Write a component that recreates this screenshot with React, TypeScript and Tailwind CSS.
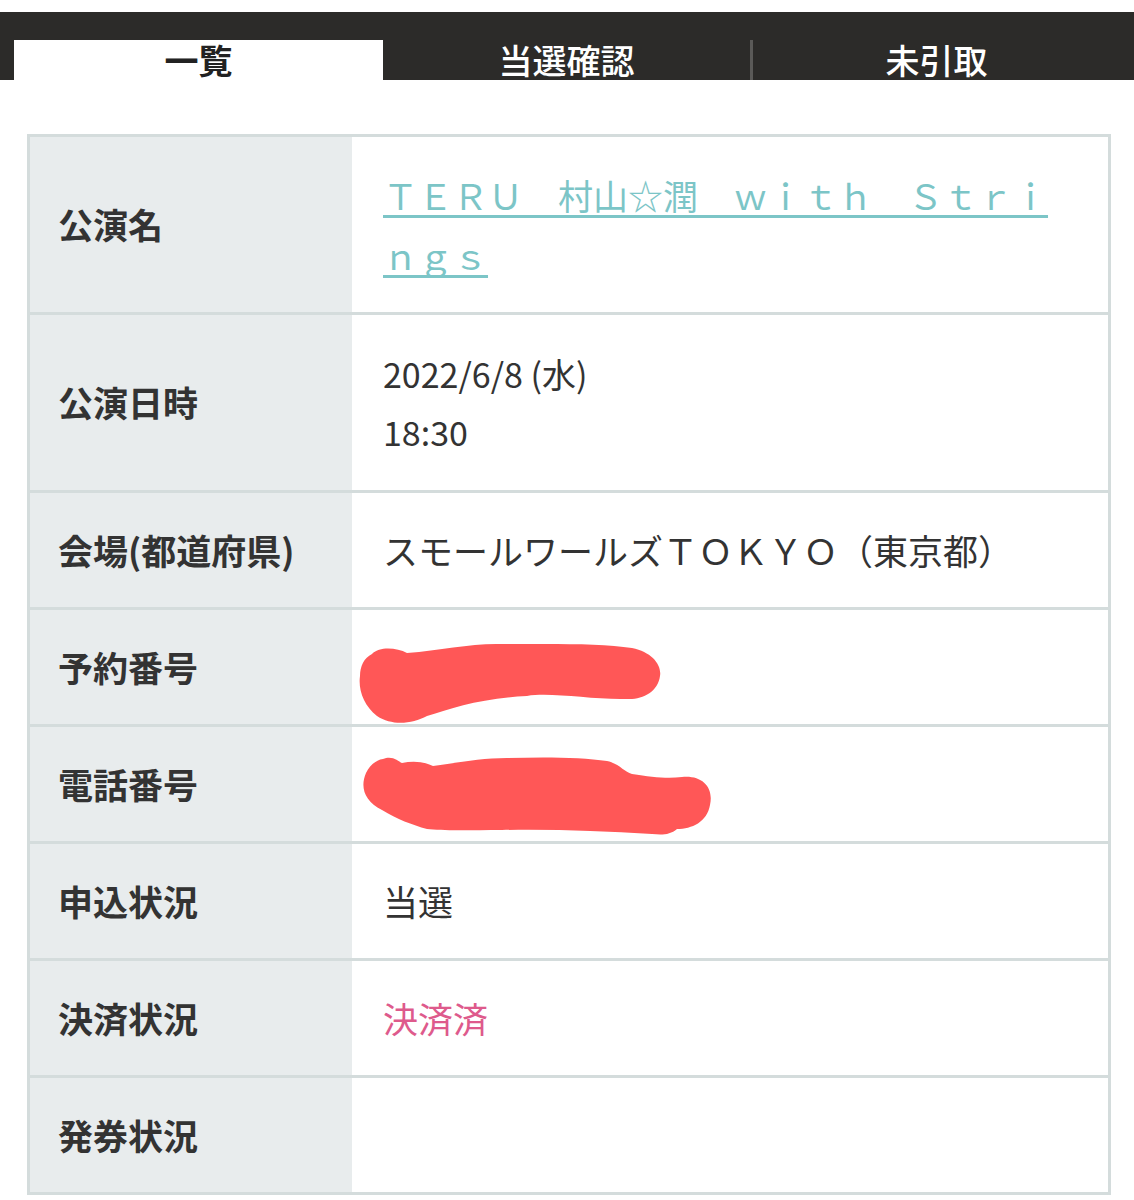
import React from "react";

type RowType = {
  label: string;
  tall?: boolean;
  content: React.ReactNode;
};

const font = { fontFamily: '"Noto Sans CJK JP", "Noto Sans", sans-serif' };

function Blob1() {
  return (
    <svg width="360" height="114" viewBox="0 0 360 114" className="block">
      <path
        d="M 20 44 C 28 36, 45 38, 55 43 C 90 40, 120 33, 150 34 C 200 34, 250 33, 280 38 C 300 42, 310 55, 308 66 C 306 82, 290 90, 275 89 C 240 90, 200 82, 175 86 C 130 88, 100 98, 75 106 C 60 114, 40 116, 25 106 C 12 96, 6 80, 8 66 C 8 56, 12 48, 20 44 Z"
        fill="#ff5757"
      />
    </svg>
  );
}

function Blob2() {
  return (
    <svg width="370" height="114" viewBox="0 0 370 114" className="block">
      <path
        d="M 31 32 C 40 28, 46 34, 50 36 C 60 34, 70 34, 81 39 C 110 35, 130 31, 155 31 C 190 30, 230 30, 255 34 C 268 37, 272 45, 280 47 C 300 50, 315 52, 330 50 C 350 48, 362 60, 358 78 C 355 95, 340 102, 325 102 C 318 108, 310 108, 300 107 C 250 104, 200 102, 150 103 C 120 103, 90 104, 75 102 C 60 98, 45 92, 30 83 C 12 74, 8 60, 14 46 C 18 38, 24 33, 31 32 Z"
        fill="#ff5757"
      />
    </svg>
  );
}

const rows: Array<RowType> = [
  {
    label: "公演名",
    tall: true,
    content: (
      <div className="pl-[31px] pr-[48px] text-[35px] leading-[60px]">
        <a className="text-[#7cc5c7] underline decoration-[3px] underline-offset-[5px]">
          ＴＥＲＵ　村山☆潤　ｗｉｔｈ　Ｓｔｒｉｎｇｓ
        </a>
      </div>
    ),
  },
  {
    label: "公演日時",
    tall: true,
    content: (
      <div className="pl-[31px] text-[34px] leading-[58px] text-[#333]">
        <div>2022/6/8 (水)</div>
        <div>18:30</div>
      </div>
    ),
  },
  {
    label: "会場(都道府県)",
    content: (
      <div className="pl-[31px] text-[35px] text-[#333]">
        スモールワールズＴＯＫＹＯ（東京都）
      </div>
    ),
  },
  {
    label: "予約番号",
    content: (
      <div className="h-full">
        <Blob1 />
      </div>
    ),
  },
  {
    label: "電話番号",
    content: (
      <div className="h-full">
        <Blob2 />
      </div>
    ),
  },
  {
    label: "申込状況",
    content: <div className="pl-[31px] text-[35px] text-[#333]">当選</div>,
  },
  {
    label: "決済状況",
    content: <div className="pl-[31px] text-[35px] text-[#de5a8c]">決済済</div>,
  },
  {
    label: "発券状況",
    content: <div />,
  },
];

export default function App() {
  return (
    <div className="min-h-[1200px] bg-white" style={font}>
      <div className="h-[12px]" />
      <nav className="flex h-[68px] items-end bg-[#2c2b29] px-[14px]">
        <div className="flex h-[40px] w-[369px] items-center justify-center bg-white pb-[2px] text-[34px] font-bold text-[#222]">
          一覧
        </div>
        <div className="flex h-[40px] flex-1 items-center justify-center pb-[2px] text-[34px] font-medium text-white">
          当選確認
        </div>
        <div className="h-[40px] w-[3px] bg-[#5b5a58]" />
        <div className="flex h-[40px] flex-1 items-center justify-center pb-[2px] text-[34px] font-medium text-white">
          未引取
        </div>
      </nav>

      <div className="ml-[27px] mr-[23px] mt-[54px] border-x-[3px] border-t-[3px] border-[#d4dcdc]">
        {rows.map((r) => (
          <div
            key={r.label}
            className={
              r.tall
                ? "flex h-[178px] border-b-[3px] border-[#d4dcdc]"
                : "flex h-[117px] border-b-[3px] border-[#d4dcdc]"
            }
          >
            <div className="flex w-[322px] shrink-0 items-center bg-[#e8eced] pl-[28px] text-[35px] font-bold text-[#333]">
              {r.label}
            </div>
            <div className="flex flex-1 items-center bg-white">{r.content}</div>
          </div>
        ))}
      </div>
    </div>
  );
}
